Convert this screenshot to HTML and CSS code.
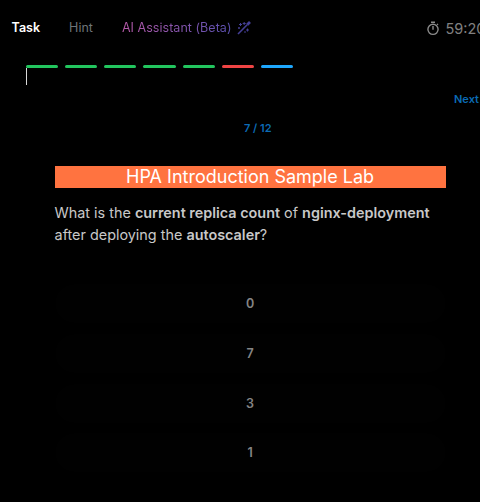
FILE: index.html
```html
<!DOCTYPE html>
<html lang="en">
<head>
<meta charset="utf-8">
<title>HPA Introduction Sample Lab</title>
<link rel="stylesheet" href="styles.css">
</head>
<body>
<header class="topbar">
  <nav class="tabs">
    <a class="tab tab-active">Task</a>
    <a class="tab">Hint</a>
    <a class="tab tab-ai"><span class="ai-label">AI Assistant (Beta)</span><svg class="wand" width="16" height="16" viewBox="0 0 16 16" fill="none" stroke="#443f96"><path d="M2 14 11.2 4.8" stroke-width="1.6"/><path d="M11.2 4.8 14 2" stroke-width="2.7"/><path d="M4.5 3v3M3 4.5h3M8.2 2v3M6.7 3.5h3M3 7v2M2 8h2M11.5 8.5v3M10 10h3M9 11v2" stroke-width="1"/></svg></a>
  </nav>
  <div class="timer">
    <svg width="14" height="15" viewBox="0 0 14 15" fill="none" stroke="#8b8b8b" stroke-width="1.4"><circle cx="7" cy="8.3" r="5.1"/><path d="M5 1.3h4M7 5v3.7M11 3.8l1-.9"/></svg>
    <span>59:20</span>
  </div>
</header>
<main class="task">
  <div class="progress">
    <i class="step"></i><i class="step"></i><i class="step"></i><i class="step"></i><i class="step"></i><i class="step step-failed"></i><i class="step step-current"></i>
  </div>
  <div class="marker"></div>
  <div class="next">Next</div>
  <div class="counter">7 / 12</div>
  <section class="question">
    <h1 class="title">HPA Introduction Sample Lab</h1>
    <p class="prompt">What is the <b>current replica count</b> of <b>nginx-deployment</b> after deploying the <b>autoscaler</b>?</p>
    <div class="options">
      <button class="option">0</button>
      <button class="option">7</button>
      <button class="option">3</button>
      <button class="option">1</button>
    </div>
  </section>
</main>
</body>
</html>
```
FILE: styles.css
```css
* { box-sizing: border-box; }
body {
  margin: 0;
  height: 502px;
  overflow: hidden;
  background: #000;
  color: #c8c8c8;
  font-family: Inter, "Liberation Sans", sans-serif;
}
.topbar {
  display: flex;
  justify-content: space-between;
  height: 56px;
  padding-left: 11.6px;
  white-space: nowrap;
}
.tabs { display: flex; align-items: center; gap: 29px; }
.tab { font-size: 12.5px; line-height: 20px; color: #6e7478; }
.tab-active { color: #fff; font-weight: 600; }
.tab-ai { display: flex; align-items: center; gap: 4px; letter-spacing: .04px; }
.ai-label {
  background: linear-gradient(90deg, #b659a8, #5950b0);
  background-clip: text;
  -webkit-background-clip: text;
  color: transparent;
}
.timer {
  display: flex;
  align-items: center;
  gap: 6px;
  width: 54.5px;
  flex: none;
  font-size: 14.5px;
  color: #808080;
}
.timer svg { flex: none; }
.progress { display: flex; gap: 7px; padding: 9px 0 0 26px; }
.step { width: 32.15px; height: 3px; border-radius: 2px; background: #22c55e; }
.step-failed { background: #ef4444; }
.step-current { background: #1ea7fd; }
.marker { width: 1px; height: 17px; margin-left: 26px; background: #d8d8d8; }
.next, .counter { font-size: 11px; font-weight: 600; line-height: 16px; color: #0b6bb5; }
.next { margin: 6px 0 0 454px; }
.counter { margin: 13px 0 0 244px; }
.question { width: 391px; margin: 30px 0 0 54.6px; }
.title {
  margin: 0;
  height: 22px;
  background: #ff7340;
  color: #fff;
  font-size: 18px;
  font-weight: 400;
  line-height: 22px;
  text-align: center;
}
.prompt { margin: 14px 0 0; font-size: 14.4px; line-height: 22px; }
.prompt b { font-weight: 600; }
.options { display: flex; flex-direction: column; gap: 10.8px; margin-top: 38px; }
.option {
  height: 39px;
  padding: 0;
  border: 0;
  border-radius: 20px;
  background: #010101;
  color: #858585;
  font: 600 12.5px/39px Inter, "Liberation Sans", sans-serif;
}
```
